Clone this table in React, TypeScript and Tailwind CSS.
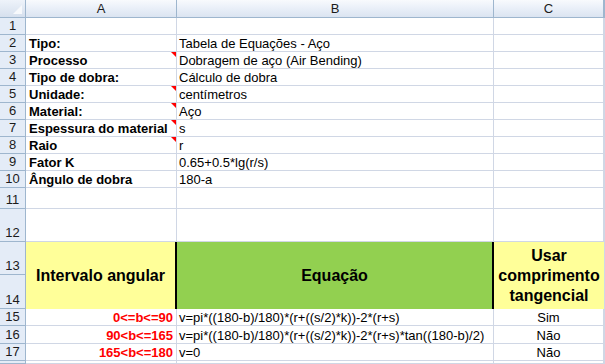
import type { ReactNode } from 'react'

type InfoRow = { label: string; value: string; note?: boolean }

const info: InfoRow[] = [
  { label: '', value: '' },
  { label: 'Tipo:', value: 'Tabela de Equações - Aço' },
  { label: 'Processo', value: 'Dobragem de aço (Air Bending)', note: true },
  { label: 'Tipo de dobra:', value: 'Cálculo de dobra' },
  { label: 'Unidade:', value: 'centímetros', note: true },
  { label: 'Material:', value: 'Aço', note: true },
  { label: 'Espessura do material', value: 's', note: true },
  { label: 'Raio', value: 'r', note: true },
  { label: 'Fator K', value: '0.65+0.5*lg(r/s)' },
  { label: 'Ângulo de dobra', value: '180-a' },
]

const equations = [
  { range: '0<=b<=90', formula: 'v=pi*((180-b)/180)*(r+((s/2)*k))-2*(r+s)', tangent: 'Sim' },
  { range: '90<b<=165', formula: 'v=pi*((180-b)/180)*(r+((s/2)*k))-2*(r+s)*tan((180-b)/2)', tangent: 'Não' },
  { range: '165<b<=180', formula: 'v=0', tangent: 'Não' },
]

const cell = 'relative border-r border-b border-[#d0d7e5] bg-white flex items-end overflow-hidden whitespace-nowrap text-[13px] leading-[15px]'
const colHead = 'border-r border-b border-[#9eb6ce] bg-gradient-to-b from-[#f8fafd] via-[#e9eff8] to-[#dbe4f1] flex items-center justify-center text-[13px] text-[#1b1b1b]'
const rowHead = 'border-r border-b border-[#9eb6ce] bg-[#e4ecf7] flex items-end justify-center text-[13px] leading-[15px] text-[#1b1b1b] pb-[1px]'

function CommentMark() {
  return <span className="absolute right-0 top-0 w-0 h-0 border-t-[5px] border-l-[5px] border-t-[#ff0000] border-l-transparent" />
}

function RowHead({ n }: { n?: number }) {
  return <div className={rowHead}>{n}</div>
}

function Blank({ children }: { children?: ReactNode }) {
  return <div className={cell}>{children}</div>
}

export default function App() {
  return (
    <div
      className="w-[605px] h-[364px] overflow-hidden bg-white text-black grid grid-cols-[26px_151px_317px_110px_1fr] grid-rows-[18px_repeat(10,17px)_21px_33px_33px_34px_17px_18px_17px_1fr]"
      style={{ fontFamily: '"Liberation Sans", Arial, sans-serif' }}
    >
      {/* column headers */}
      <div className="relative border-r border-b border-[#9eb6ce] bg-gradient-to-b from-[#eef3fa] to-[#d6e0ee]">
        <span className="absolute right-[3px] bottom-[3px] w-0 h-0 border-b-[9px] border-l-[9px] border-b-[#f7f9fc] border-l-transparent" />
      </div>
      <div className={colHead}>A</div>
      <div className={colHead}>B</div>
      <div className={colHead}>C</div>
      <div className={colHead} />

      {/* rows 1-10 */}
      {info.map((row, i) => (
        <div key={i} className="contents">
          <RowHead n={i + 1} />
          <div className={`${cell} pl-[3px] font-bold`}>
            {row.label}
            {row.note && <CommentMark />}
          </div>
          <div className={`${cell} pl-[2px]`}>{row.value}</div>
          <Blank />
          <Blank />
        </div>
      ))}

      {/* rows 11-12 */}
      {[11, 12].map((n) => (
        <div key={n} className="contents">
          <RowHead n={n} />
          <Blank />
          <Blank />
          <Blank />
          <Blank />
        </div>
      ))}

      {/* rows 13-14: table header, merged vertically */}
      <RowHead n={13} />
      <div className="row-span-2 bg-[#ffff99] border-r-2 border-black flex items-center justify-center font-bold text-[16px] leading-[20px]">
        Intervalo angular
      </div>
      <div className="row-span-2 bg-[#92d050] border-r-2 border-black flex items-center justify-center font-bold text-[16px] leading-[20px]">
        Equação
      </div>
      <div className="row-span-2 bg-[#ffff99] flex items-center justify-center text-center font-bold text-[16px] leading-[20px] pt-[1px]">
        Usar
        <br />
        comprimento
        <br />
        tangencial
      </div>
      <Blank />
      <RowHead n={14} />
      <Blank />

      {/* rows 15-17 */}
      {equations.map((eq, i) => (
        <div key={eq.range} className="contents">
          <RowHead n={15 + i} />
          <div className={`${cell} justify-end pr-[3px] font-bold text-[#ff0000]`}>{eq.range}</div>
          <div className={`${cell} pl-[2px]`}>{eq.formula}</div>
          <div className={`${cell} justify-center`}>{eq.tangent}</div>
          <Blank />
        </div>
      ))}

      {/* row 18, cut off */}
      <RowHead />
      <Blank />
      <Blank />
      <Blank />
      <Blank />
    </div>
  )
}
